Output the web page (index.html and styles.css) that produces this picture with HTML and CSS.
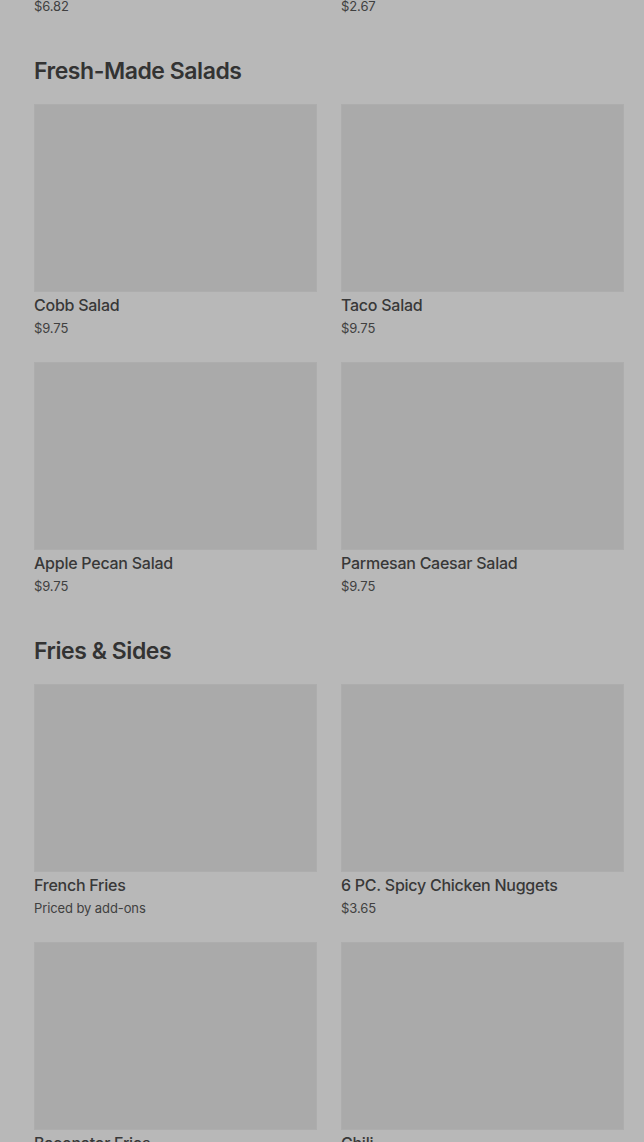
FILE: index.html
```html
<!DOCTYPE html>
<html>
<head>
<meta charset="utf-8">
<link rel="stylesheet" href="styles.css">
</head>
<body>
<main class="menu">
  <section class="section section-first">
    <div class="grid">
      <div class="card"><div class="thumb"></div><div class="name">Chicken Wrap</div><div class="price">$6.82</div></div>
      <div class="card"><div class="thumb"></div><div class="name">Junior Frosty</div><div class="price">$2.67</div></div>
    </div>
  </section>
  <section class="section">
    <h2 class="heading">Fresh-Made Salads</h2>
    <div class="grid">
      <div class="card"><div class="thumb"></div><div class="name">Cobb Salad</div><div class="price">$9.75</div></div>
      <div class="card"><div class="thumb"></div><div class="name">Taco Salad</div><div class="price">$9.75</div></div>
      <div class="card"><div class="thumb"></div><div class="name">Apple Pecan Salad</div><div class="price">$9.75</div></div>
      <div class="card"><div class="thumb"></div><div class="name">Parmesan Caesar Salad</div><div class="price">$9.75</div></div>
    </div>
  </section>
  <section class="section">
    <h2 class="heading">Fries &amp; Sides</h2>
    <div class="grid">
      <div class="card"><div class="thumb"></div><div class="name">French Fries</div><div class="price">Priced by add-ons</div></div>
      <div class="card"><div class="thumb"></div><div class="name">6 PC. Spicy Chicken Nuggets</div><div class="price">$3.65</div></div>
      <div class="card"><div class="thumb"></div><div class="name">Baconator Fries</div><div class="price">$4.99</div></div>
      <div class="card"><div class="thumb"></div><div class="name">Chili</div><div class="price">$3.49</div></div>
    </div>
  </section>
</main>
</body>
</html>
```
FILE: styles.css
```css
html, body {
  margin: 0;
  padding: 0;
  background: #b8b8b8;
  overflow: hidden;
}
body {
  font-family: Inter, "Noto Sans", "Liberation Sans", sans-serif;
  color: #333333;
}
.menu {
  padding: 0 20px 0 34px;
  margin-top: -218px;
}
.heading {
  margin: 39px 0 17px;
  font-size: 23px;
  line-height: 32px;
  font-weight: 600;
  letter-spacing: -0.45px;
  color: #333333;
}
.grid {
  display: grid;
  grid-template-columns: 283px 283px;
  column-gap: 24px;
  row-gap: 24px;
}
.card {
  display: flex;
  flex-direction: column;
}
.thumb {
  height: 188px;
  background: #aaaaaa;
  box-shadow: inset 0 0 0 1px #adadad;
}
.name {
  margin-top: 3px;
  font-size: 16px;
  line-height: 20px;
  font-weight: 500;
  letter-spacing: -0.25px;
  color: #383838;
}
.price {
  margin-top: 3px;
  font-size: 13px;
  line-height: 20px;
  font-weight: 400;
  letter-spacing: -0.1px;
  color: #404040;
}
```
